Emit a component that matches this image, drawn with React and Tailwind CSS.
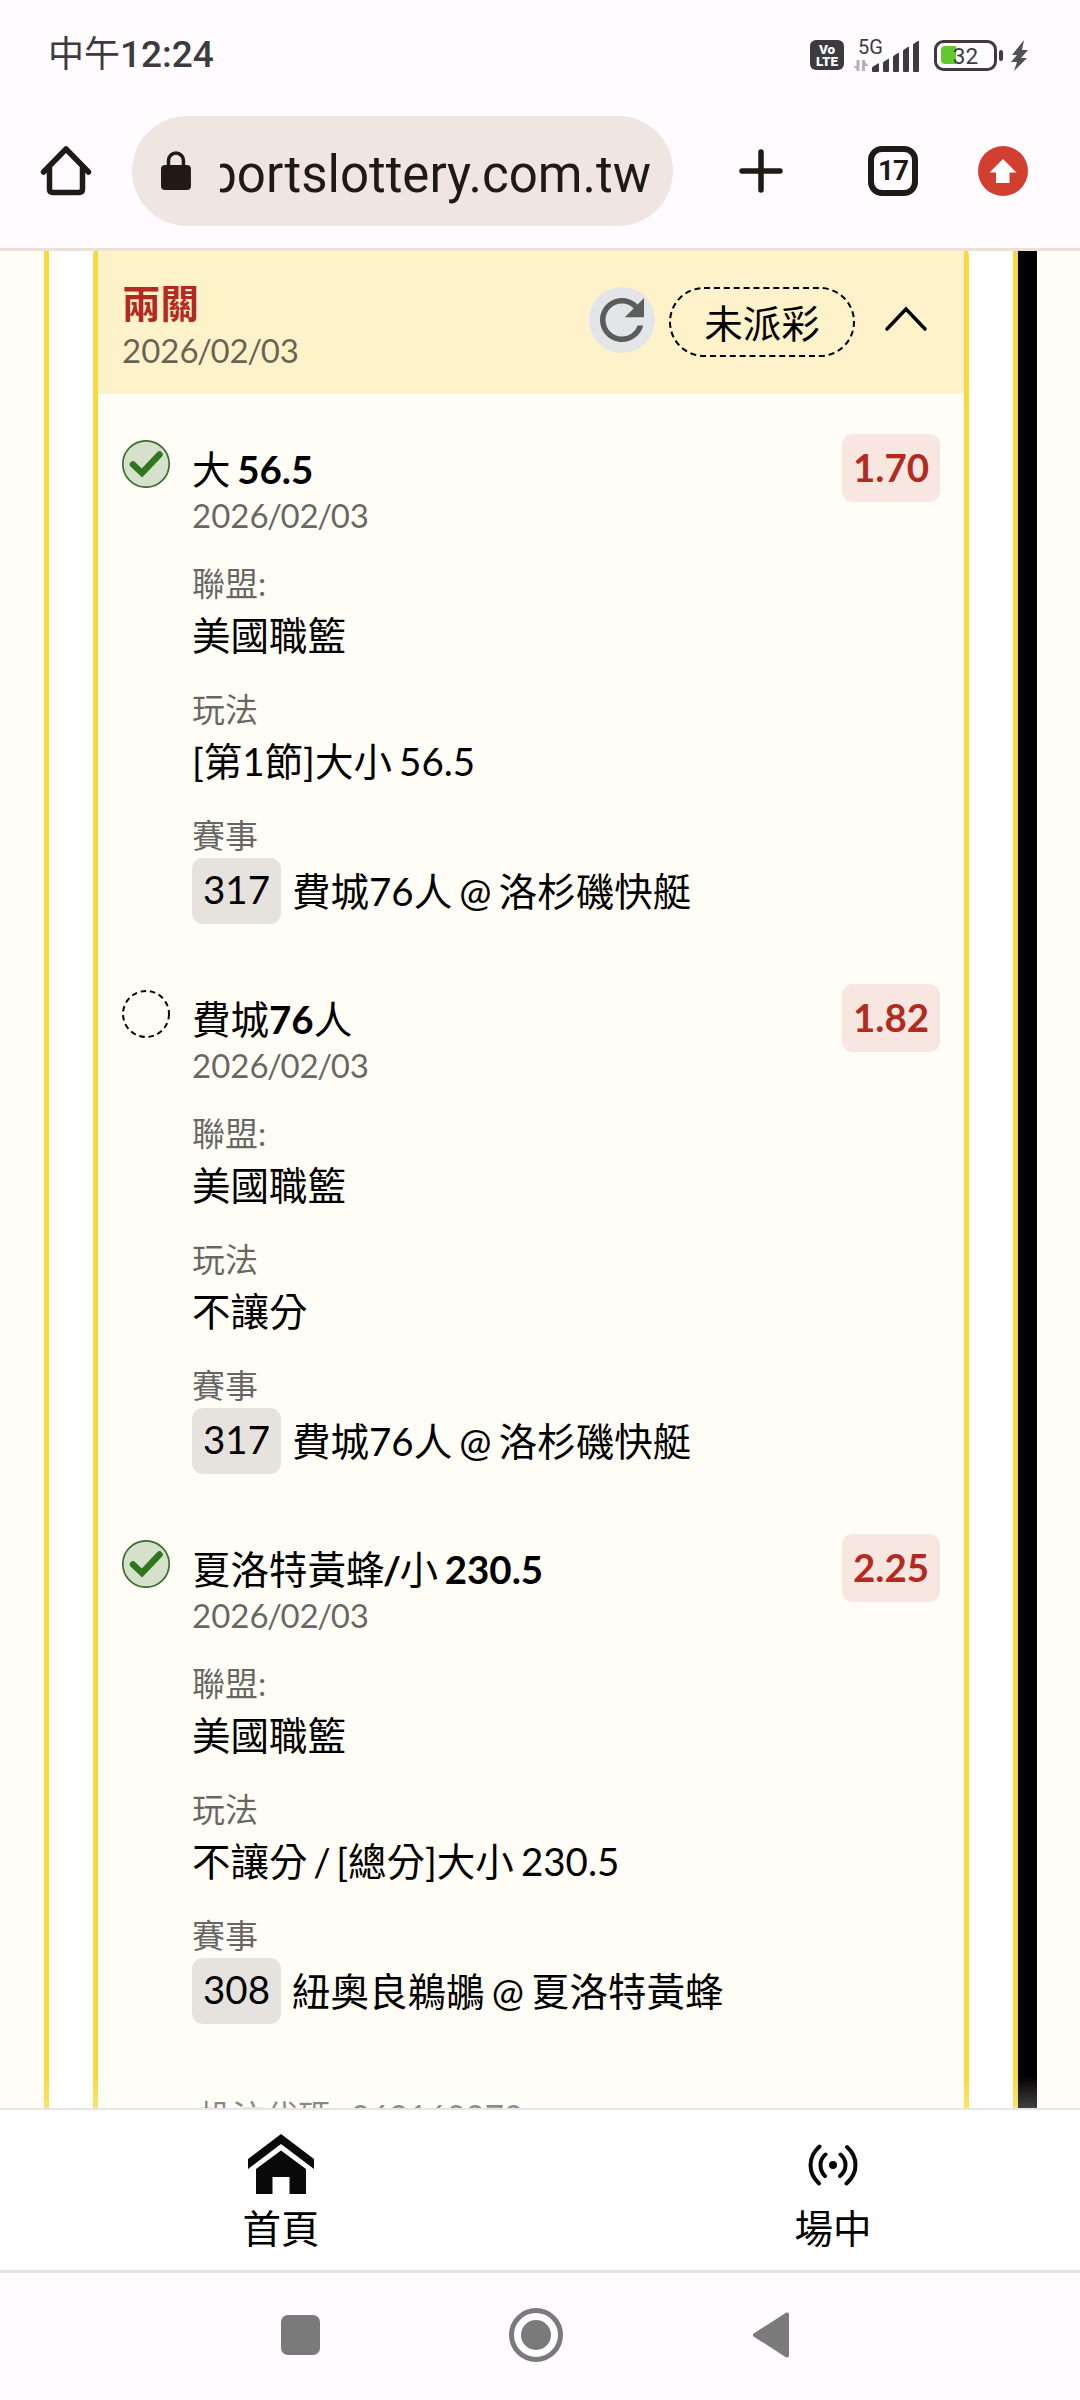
import React from 'react';
import clsx from 'clsx';

const bets = [
  {
    id: 1,
    title: '大 56.5',
    date: '2026/02/03',
    odds: '1.70',
    won: true,
    league: '美國職籃',
    play: '[第1節]大小 56.5',
    code: '317',
    match: '費城76人 @ 洛杉磯快艇',
  },
  {
    id: 2,
    title: '費城76人',
    date: '2026/02/03',
    odds: '1.82',
    won: false,
    league: '美國職籃',
    play: '不讓分',
    code: '317',
    match: '費城76人 @ 洛杉磯快艇',
  },
  {
    id: 3,
    title: '夏洛特黃蜂/小 230.5',
    date: '2026/02/03',
    odds: '2.25',
    won: true,
    league: '美國職籃',
    play: '不讓分 / [總分]大小 230.5',
    code: '308',
    match: '紐奧良鵜鶘 @ 夏洛特黃蜂',
  },
];

function StatusBar() {
  return (
    <div className="flex h-[108px] items-center justify-between pl-[48px] pr-[50px] pt-[2px] text-[#3c3b3f]">
      <div className="text-[37px] font-medium leading-[44px]">
        <span className="text-[36px] font-normal">中午</span>12:24
      </div>
      <div className="flex h-8 items-center">
        <div className="flex h-[30px] w-[34px] flex-col items-center justify-center rounded-md bg-[#3c3b3f] text-[13.5px] font-black leading-[12px] text-white">
          <span>Vo</span>
          <span>LTE</span>
        </div>
        <svg className="ml-2 overflow-visible" width="70" height="34" viewBox="0 0 70 34">
          <text x="6" y="16" fontSize="20" fill="#3c3b3f">5G</text>
          <path d="M1 28h6v5zM4.500 22h3v11h-3zM10 22h3v11h-3zM11 22l6 6h-6z" fill="#b5b1b6" />
          <g fill="#3c3b3f">
            <path d="M20 33v-3q0-1 1-1.500l5-3q1-.5 1 .5v7q0 1-1 1h-5q-1 0-1-1z" />
            <path d="M31 33v-8q0-1 1-1.500l4-2.500q1-.5 1 .5v11.500q0 1-1 1h-4q-1 0-1-1z" />
            <path d="M41 33V19q0-1 1-1.500l4-2.500q1-.5 1 .5V33q0 1-1 1h-4q-1 0-1-1z" />
            <path d="M51 33V13q0-1 1-1.500l4-2.500q1-.5 1 .5V33q0 1-1 1h-4q-1 0-1-1z" />
            <path d="M61 33V7q0-1 1-1.500l4-2.500q1-.5 1 .5V33q0 1-1 1h-4q-1 0-1-1z" />
          </g>
        </svg>
        <svg className="ml-3" width="96" height="34" viewBox="0 0 96 34">
          <rect x="1.500" y="3.500" width="60" height="28" rx="8" fill="none" stroke="#3c3b3f" strokeWidth="3" />
          <path d="M11 8h11v18H11q-4 0-4-4V12q0-4 4-4z" fill="#63c92c" />
          <text x="31.500" y="25.500" fontSize="22.500" textAnchor="middle" fill="#3c3b3f">32</text>
          <rect x="65" y="12" width="4" height="11" rx="2" fill="#3c3b3f" />
          <path d="M90 2L78 17h5l-6 7h6l-3 9 13-13h-6l7-8h-6z" fill="#515054" />
        </svg>
      </div>
    </div>
  );
}

function BrowserBar() {
  return (
    <div className="flex h-[140px] items-center pb-[14px] pl-[40px]">
      <svg width="52" height="52" viewBox="0 0 52 52" fill="none" stroke="#201a17" strokeWidth="5.500" strokeLinejoin="round" strokeLinecap="round">
        <path d="M3.500 27L26 4l22.500 23M9.500 22v22q0 3.500 3.500 3.500h26q3.500 0 3.500-3.500V22" />
      </svg>
      <div className="ml-[40px] flex h-[110px] w-[541px] items-center rounded-full bg-[#efe6e2] pl-[29px] pr-[22px]">
        <svg width="30" height="40" viewBox="0 0 30 40">
          <rect y="14" width="30" height="25" rx="4" fill="#201a17" />
          <path d="M7.500 15V9.500a7.500 7.500 0 0115 0V15" fill="none" stroke="#201a17" strokeWidth="3.500" />
        </svg>
        <div className="ml-[29px] flex w-[432px] justify-end overflow-hidden whitespace-nowrap pt-[7px] text-[51px] leading-[66px] text-[#201a17]">
          sportslottery.com.tw
        </div>
      </div>
      <svg className="ml-[66px]" width="44" height="44" viewBox="0 0 44 44" stroke="#201a17" strokeWidth="5.500" strokeLinecap="round">
        <path d="M22 3v38M3 22h38" />
      </svg>
      <div className="ml-[85px] flex h-[50px] w-[50px] items-center justify-center rounded-[14px] border-[6px] border-[#201a17] text-[28px] font-bold leading-none tracking-[-1px] text-[#201a17]">
        17
      </div>
      <svg className="ml-[60px]" width="50" height="50" viewBox="0 0 50 50">
        <circle cx="25" cy="25" r="25" fill="#d23f31" />
        <path d="M25 13L11.500 26.500H18V37h13.500V26.500h7z" fill="#fff" />
      </svg>
    </div>
  );
}

function ResultIcon({ won }) {
  return (
    <svg className="mt-[6px] shrink-0" width="48" height="48" viewBox="0 0 48 48" fill="none">
      {won ? (
        <>
          <circle cx="24" cy="24" r="23.200" fill="#d6e1cc" stroke="#3f6f35" strokeWidth="1.700" />
          <path d="M11 24.500l9 8.500L37.500 14.500" stroke="#2f761f" strokeWidth="6.500" strokeLinecap="round" />
        </>
      ) : (
        <circle cx="24" cy="24" r="23" stroke="#000" strokeWidth="2" strokeDasharray="5.500 3.800" />
      )}
    </svg>
  );
}

// Lato's slash sits wide, so pull its neighbours in
function Tight({ text }) {
  return text.split('/').map((part, i) => (
    <React.Fragment key={i}>
      {i > 0 && <span className="mx-[-1.5px]">/</span>}
      {part}
    </React.Fragment>
  ));
}

// Latin runs are bold while the Chinese glyphs stay at regular weight
function BetTitle({ text }) {
  return (
    <div className="text-[38.5px] leading-[52px]">
      {text.split(/([\x20-\x7e]+)/).map((part, i) => (
        <span key={i} className={clsx(i % 2 === 1 && 'font-bold')}>
          <Tight text={part} />
        </span>
      ))}
    </div>
  );
}

function Field({ label, value }) {
  return (
    <div className="mb-[27px]">
      <div className="mb-[5px] text-[33px] leading-[42px] text-black/60">{label}</div>
      <div className="text-[38.5px] leading-[52px]">
        <Tight text={value} />
      </div>
    </div>
  );
}

function BetRow({ bet }) {
  return (
    <div className="flex items-start">
      <ResultIcon won={bet.won} />
      <div className="ml-[22px] flex-1 pt-[9px]">
        <BetTitle text={bet.title} />
        <div className="mb-[26px] mt-[-1px] text-[33px] leading-[42px] text-black/60">
          <Tight text={bet.date} />
        </div>
        <Field label="聯盟:" value={bet.league} />
        <Field label="玩法" value={bet.play} />
        <div className="text-[33px] leading-[42px] text-black/60">賽事</div>
        <div className="mt-[2px] flex h-[66px] items-start text-[38.5px]">
          <span className="h-[66px] w-[89px] rounded-[11px] bg-[#e6e3de] text-center leading-[62px]">{bet.code}</span>
          <span className="ml-[11px] leading-[67px]">{bet.match}</span>
        </div>
      </div>
      <div className="h-[68px] w-[98px] rounded-[11px] bg-[#f7e7e0] text-center text-[38.5px] font-bold leading-[66px] text-[#b22a20]">
        {bet.odds}
      </div>
    </div>
  );
}

function TicketHeader() {
  return (
    <div className="flex h-[144px] items-start bg-[#fef2cb] pl-6 pr-[35px] pt-[30px]">
      <div className="flex-1">
        <div className="text-[38.5px] font-bold leading-[46px] text-[#b22a20]">兩關</div>
        <div className="mt-[4px] text-[33px] leading-[40px] text-black/60">
          <Tight text="2026/02/03" />
        </div>
      </div>
      <div className="mt-[7px] flex h-[66px] w-[66px] items-center justify-center rounded-full bg-[#e3e5e8]">
        <svg width="66" height="66" viewBox="0 0 24 24" fill="#5c5c5c">
          <path d="M17.650 6.350C16.200 4.900 14.210 4 12 4c-4.420 0-7.990 3.580-7.990 8s3.570 8 7.990 8c3.730 0 6.840-2.550 7.730-6h-2.080c-.82 2.330-3.040 4-5.650 4-3.310 0-6-2.690-6-6s2.690-6 6-6c1.660 0 3.140.69 4.220 1.780L13 11h7V4l-2.350 2.350z" />
        </svg>
      </div>
      <div className="relative ml-[14px] mt-[7px] h-[70px] w-[186px] text-center text-[38.5px] leading-[72px]">
        <svg className="absolute inset-0" width="186" height="70" fill="none">
          <rect x="1" y="1" width="184" height="68" rx="34" stroke="#000" strokeWidth="2" strokeDasharray="6 3.900" />
        </svg>
        未派彩
      </div>
      <svg className="ml-[28px] mt-[25px]" width="46" height="28" viewBox="0 0 46 28" fill="none" stroke="#000" strokeWidth="3.500" strokeLinecap="round">
        <path d="M4 24L23 4l19 20" />
      </svg>
    </div>
  );
}

function Ticket() {
  return (
    <div className="-mt-[6px] w-[876px] rounded-t-[11px] border-x-[5px] border-t-[5px] border-[#f8d93c] bg-[#fffdf5] [word-spacing:-2.7px]">
      <TicketHeader />
      <div className="flex flex-col gap-[60px] px-6 pt-[40px]">
        {bets.map((bet) => (
          <BetRow key={bet.id} bet={bet} />
        ))}
      </div>
      <div className="pl-[101px] pt-[71px] text-[33px] leading-[42px] text-black/60">投注代碼 : 262162272</div>
    </div>
  );
}

function BottomNav() {
  return (
    <div className="flex h-[165px] justify-between border-b-[3px] border-t-2 border-b-[#ece1d8] border-t-[#e6e6e4] bg-white px-[194px] text-[38.5px] leading-[52px]">
      <div className="flex w-[174px] flex-col items-center pt-6">
        <svg width="66" height="60" viewBox="0 0 66 60" fill="#0a0a0a">
          <path d="M33 0l33 25v10L33 10 0 35V25z" />
          <path d="M33 16.500L58 35v25H41.500V43h-17v17H8V35z" />
        </svg>
        <div className="mt-[8px]">首頁</div>
      </div>
      <div className="-mr-[34px] flex w-[174px] flex-col items-center pt-[34px]">
        <svg width="50" height="42" viewBox="0 0 50 42" fill="none" stroke="#0a0a0a" strokeWidth="4" strokeLinecap="round">
          <path d="M11.500 2.500Q2.500 10.500 2.500 21t8.500 18.500M39 3q8.500 7.500 8.500 18T38.500 39.500M17.500 10.500q-5 4-5 10.500t4.500 11M32.500 10.500q5 4 5 10.500t-5.500 11" />
          <circle cx="25" cy="21" r="4" fill="#0a0a0a" stroke="none" />
        </svg>
        <div className="mt-4">場中</div>
      </div>
    </div>
  );
}

function SystemNav() {
  return (
    <div className="flex h-[127px] items-center pb-[3px] pl-[281px]">
      <div className="h-10 w-[39px] rounded-[7px] bg-[#7a7a7a]" />
      <div className="ml-[189px] flex h-[54px] w-[54px] items-center justify-center rounded-full border-[5px] border-[#7a7a7a]">
        <div className="h-[30px] w-[30px] rounded-full bg-[#7a7a7a]" />
      </div>
      <svg className="ml-[189px]" width="38" height="46" viewBox="0 0 38 46">
        <path d="M35 2.500v41L3 23z" fill="#7a7a7a" stroke="#7a7a7a" strokeWidth="4" strokeLinejoin="round" />
      </svg>
    </div>
  );
}

export default function App() {
  return (
    <div className="flex h-[2400px] w-[1080px] flex-col overflow-hidden bg-[#fffbff] font-['Roboto','Noto_Sans_CJK_TC',sans-serif] text-black">
      <StatusBar />
      <BrowserBar />
      <div className="relative flex h-[1860px] overflow-hidden border-t-[3px] border-[#ece1d8] bg-[#fffdf5] font-['Lato','Noto_Sans_CJK_TC',sans-serif]">
        <div className="ml-11 flex w-[974px] items-start justify-center border-x-[5px] border-[#f8d93c] bg-white">
          <Ticket />
        </div>
        <div className="w-[19px] bg-black" />
        <div className="absolute inset-x-0 bottom-0 h-8 bg-linear-to-b from-white/0 to-white/25" />
      </div>
      <div className="font-['Lato','Noto_Sans_CJK_TC',sans-serif]">
        <BottomNav />
      </div>
      <SystemNav />
    </div>
  );
}
